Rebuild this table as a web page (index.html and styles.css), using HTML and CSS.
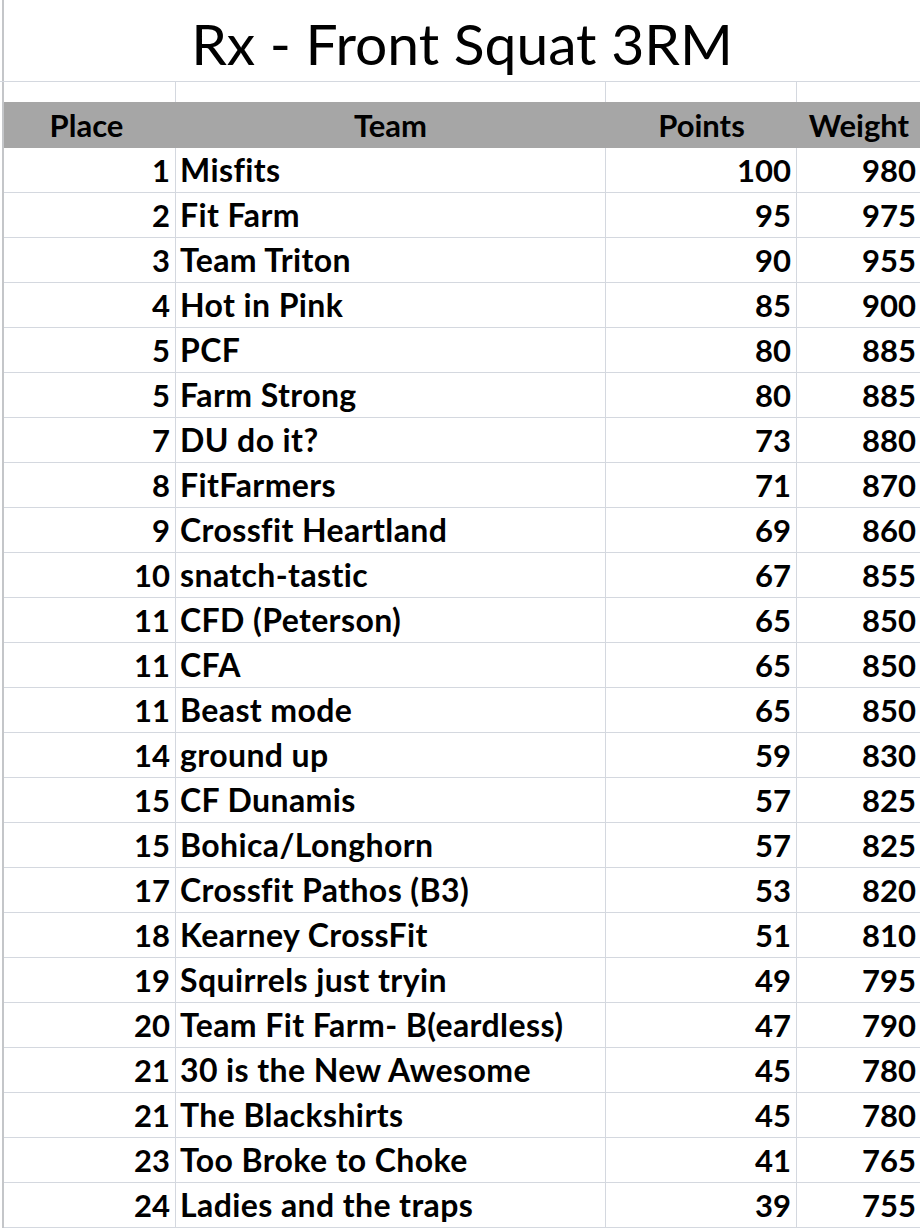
FILE: index.html
```html
<!DOCTYPE html>
<html>
<head>
<meta charset="utf-8">
<link rel="stylesheet" href="styles.css">
</head>
<body>
<div class="sheet">
  <div class="title">Rx - Front Squat 3RM</div>
  <div class="row blank"><div class="c a"></div><div class="c b"></div><div class="c p"></div><div class="c w"></div></div>
  <div class="row head"><div class="c a">Place</div><div class="c b">Team</div><div class="c p">Points</div><div class="c w">Weight</div></div>
  <div class="row"><div class="c a">1</div><div class="c b">Misfits</div><div class="c p">100</div><div class="c w">980</div></div>
  <div class="row"><div class="c a">2</div><div class="c b">Fit Farm</div><div class="c p">95</div><div class="c w">975</div></div>
  <div class="row"><div class="c a">3</div><div class="c b">Team Triton</div><div class="c p">90</div><div class="c w">955</div></div>
  <div class="row"><div class="c a">4</div><div class="c b">Hot in Pink</div><div class="c p">85</div><div class="c w">900</div></div>
  <div class="row"><div class="c a">5</div><div class="c b">PCF</div><div class="c p">80</div><div class="c w">885</div></div>
  <div class="row"><div class="c a">5</div><div class="c b">Farm Strong</div><div class="c p">80</div><div class="c w">885</div></div>
  <div class="row"><div class="c a">7</div><div class="c b">DU do it?</div><div class="c p">73</div><div class="c w">880</div></div>
  <div class="row"><div class="c a">8</div><div class="c b">FitFarmers</div><div class="c p">71</div><div class="c w">870</div></div>
  <div class="row"><div class="c a">9</div><div class="c b">Crossfit Heartland</div><div class="c p">69</div><div class="c w">860</div></div>
  <div class="row"><div class="c a">10</div><div class="c b">snatch-tastic</div><div class="c p">67</div><div class="c w">855</div></div>
  <div class="row"><div class="c a">11</div><div class="c b">CFD (Peterson)</div><div class="c p">65</div><div class="c w">850</div></div>
  <div class="row"><div class="c a">11</div><div class="c b">CFA</div><div class="c p">65</div><div class="c w">850</div></div>
  <div class="row"><div class="c a">11</div><div class="c b">Beast mode</div><div class="c p">65</div><div class="c w">850</div></div>
  <div class="row"><div class="c a">14</div><div class="c b">ground up</div><div class="c p">59</div><div class="c w">830</div></div>
  <div class="row"><div class="c a">15</div><div class="c b">CF Dunamis</div><div class="c p">57</div><div class="c w">825</div></div>
  <div class="row"><div class="c a">15</div><div class="c b">Bohica/Longhorn</div><div class="c p">57</div><div class="c w">825</div></div>
  <div class="row"><div class="c a">17</div><div class="c b">Crossfit Pathos (B3)</div><div class="c p">53</div><div class="c w">820</div></div>
  <div class="row"><div class="c a">18</div><div class="c b">Kearney CrossFit</div><div class="c p">51</div><div class="c w">810</div></div>
  <div class="row"><div class="c a">19</div><div class="c b">Squirrels just tryin</div><div class="c p">49</div><div class="c w">795</div></div>
  <div class="row"><div class="c a">20</div><div class="c b">Team Fit Farm- B(eardless)</div><div class="c p">47</div><div class="c w">790</div></div>
  <div class="row"><div class="c a">21</div><div class="c b">30 is the New Awesome</div><div class="c p">45</div><div class="c w">780</div></div>
  <div class="row"><div class="c a">21</div><div class="c b">The Blackshirts</div><div class="c p">45</div><div class="c w">780</div></div>
  <div class="row"><div class="c a">23</div><div class="c b">Too Broke to Choke</div><div class="c p">41</div><div class="c w">765</div></div>
  <div class="row"><div class="c a">24</div><div class="c b">Ladies and the traps</div><div class="c p">39</div><div class="c w">755</div></div>
</div>
</body>
</html>
```

FILE: styles.css
```css
html, body {
  margin: 0;
  padding: 0;
  background: #ffffff;
  overflow: hidden;
}
body {
  width: 920px;
  height: 1228px;
}
.sheet {
  margin-left: 2px;
  width: 920px;
  border-left: 2px solid #c4c6c9;
  font-family: Lato, "Liberation Sans", sans-serif;
  color: #000;
}
.title {
  height: 81px;
  border-bottom: 1px solid #d4d8df;
  font-size: 57px;
  font-weight: 400;
  line-height: 86px;
  text-align: center;
  margin-left: -4px;
  width: 924px;
  overflow: hidden;
}
.row {
  display: grid;
  grid-template-columns: 172px 430px 191px 124px;
  height: 45px;
  font-size: 31px;
  font-weight: 700;
  line-height: 44px;
}
.c {
  border-right: 1px solid #d4d8df;
  border-bottom: 1px solid #d4d8df;
  padding: 0 5px;
  white-space: nowrap;
  overflow: hidden;
}
.c.w {
  border-right: none;
}
.a, .p, .w {
  text-align: right;
}
.b {
  text-align: left;
  font-size: 32px;
  letter-spacing: 0.4px;
  padding-left: 4px;
}
.blank {
  height: 20px;
}
.blank .c {
  border-bottom: none;
}
.head {
  height: 46px;
  background: #a6a6a6;
  line-height: 46px;
}
.head .c {
  border: none;
  text-align: center;
  font-size: 31px;
  letter-spacing: 0;
}
.head .a {
  padding-right: 12px;
}
```
